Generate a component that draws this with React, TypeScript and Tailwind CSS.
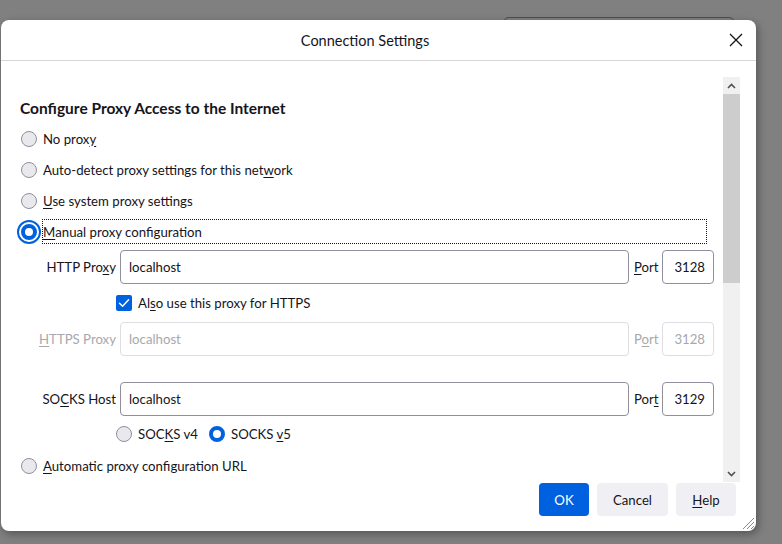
import type { ReactNode } from 'react';

const Radio = ({ checked = false, focused = false }: { checked?: boolean; focused?: boolean }) => (
  <span
    className={`relative flex h-[16px] w-[16px] shrink-0 items-center justify-center rounded-full ${
      checked ? 'border-[4px] border-[#0061e0] bg-white' : 'border border-[#8f8f9d] bg-[#e9e9ed]'
    } ${focused ? 'outline-2 outline-offset-[2px] outline-[#0061e0]' : ''}`}
  />
);

const Checkbox = () => (
  <span className="flex h-[16px] w-[16px] shrink-0 items-center justify-center rounded-[2px] bg-[#0061e0]">
    <svg width="12" height="12" viewBox="0 0 12 12" fill="none">
      <path d="M1.5 6.2 L4.6 9.2 L10.6 2.8" stroke="white" strokeWidth="1.5" strokeLinecap="round" strokeLinejoin="round" />
    </svg>
  </span>
);

const Key = ({ children }: { children: ReactNode }) => <span className="underline underline-offset-2">{children}</span>;

const ProxyRow = ({
  label,
  port,
  portLabel,
  disabled = false,
  mt,
}: {
  label: ReactNode;
  port: string;
  portLabel: ReactNode;
  disabled?: boolean;
  mt: string;
}) => (
  <div className={`flex items-center ${mt}`}>
    <div className={`w-[100px] pr-[4px] text-right ${disabled ? 'text-[#a8a8ac]' : ''}`}>{label}</div>
    <div
      className={`flex h-[34px] w-[509px] items-center rounded-[4px] border px-[8px] ${
        disabled ? 'border-[#dedee2] text-[#a8a8ac]' : 'border-[#8f8f9d]'
      }`}
    >
      localhost
    </div>
    <div className={`w-[33px] pl-[5px] ${disabled ? 'text-[#a8a8ac]' : ''}`}>{portLabel}</div>
    <div
      className={`flex h-[34px] w-[52px] items-center justify-end rounded-[4px] border px-[8px] ${
        disabled ? 'border-[#dedee2] text-[#a8a8ac]' : 'border-[#8f8f9d]'
      }`}
    >
      {port}
    </div>
  </div>
);

const ScrollArrow = ({ up }: { up?: boolean }) => (
  <div className="flex h-[17px] w-[17px] items-center justify-center">
    <svg width="9" height="6" viewBox="0 0 9 6">
      <path d={up ? 'M1 5 L4.5 1.5 L8 5' : 'M1 1 L4.5 4.5 L8 1'} stroke="#505050" strokeWidth="1.6" fill="none" />
    </svg>
  </div>
);

export default function App() {
  return (
    <div className="relative h-[544px] w-[782px] overflow-hidden bg-[#808080] text-[13.2px] leading-[18px] text-[#15141a] font-['Lato',sans-serif]">
      {/* window behind the dialog */}
      <div className="absolute left-[503px] top-[17px] h-[40px] w-[232px] rounded-[6px] border border-[#4e4e4e]" />

      <div className="relative pl-[1px] pt-[20px]">
        <div className="flex h-[511px] w-[755px] flex-col rounded-[8px] bg-white shadow-[2px_3px_8px_rgba(0,0,0,0.35)]">
          {/* header */}
          <div className="flex h-[41px] shrink-0 items-center border-b border-[#d6d6d6]">
            <div className="flex-1 pt-[2px] text-center text-[14.5px]">Connection Settings</div>
            <div className="flex w-[27px] items-center justify-start">
              <svg width="14" height="14" viewBox="0 0 14 14">
                <path d="M1 1 L13 13 M13 1 L1 13" stroke="#15141a" strokeWidth="1.3" />
              </svg>
            </div>
          </div>

          {/* scroll area */}
          <div className="flex h-[421px] shrink-0 pr-[16px] pt-[16px]">
            <div className="flex-1 overflow-hidden pl-[19px]">
              <div className="mt-[21px] h-[20px] text-[15.5px] font-bold leading-[20px]">
                Configure Proxy Access to the Internet
              </div>
              <div className="mt-[5px] flex h-[31px] items-center gap-[6px] pl-[1px]">
                <Radio />
                <span>
                  No prox<Key>y</Key>
                </span>
              </div>
              <div className="flex h-[31px] items-center gap-[6px] pl-[1px]">
                <Radio />
                <span>
                  Auto-detect proxy settings for this net<Key>w</Key>ork
                </span>
              </div>
              <div className="flex h-[31px] items-center gap-[6px] pl-[1px]">
                <Radio />
                <span>
                  <Key>U</Key>se system proxy settings
                </span>
              </div>
              <div className="flex h-[31px] items-center gap-[5px] pl-[1px]">
                <Radio checked focused />
                <span className="flex h-[25px] w-[665px] items-center border border-dotted border-[#15141a]">
                  <Key>M</Key>anual proxy configuration
                </span>
              </div>

              <ProxyRow
                mt="mt-[3px]"
                label={
                  <>
                    HTTP Pro<Key>x</Key>y
                  </>
                }
                portLabel={
                  <>
                    <Key>P</Key>ort
                  </>
                }
                port="3128"
              />
              <div className="mt-[10px] flex h-[18px] items-center gap-[6px] pl-[96px]">
                <Checkbox />
                <span>
                  Al<Key>s</Key>o use this proxy for HTTPS
                </span>
              </div>
              <ProxyRow
                mt="mt-[10px]"
                disabled
                label={
                  <>
                    <Key>H</Key>TTPS Proxy
                  </>
                }
                portLabel={
                  <>
                    P<Key>o</Key>rt
                  </>
                }
                port="3128"
              />
              <ProxyRow
                mt="mt-[26px]"
                label={
                  <>
                    SO<Key>C</Key>KS Host
                  </>
                }
                portLabel={
                  <>
                    Por<Key>t</Key>
                  </>
                }
                port="3129"
              />
              <div className="mt-[7px] flex h-[22px] items-center pl-[96px]">
                <Radio />
                <span className="ml-[6px] w-[71px]">
                  SOC<Key>K</Key>S v4
                </span>
                <Radio checked />
                <span className="ml-[6px]">
                  SOCKS <Key>v</Key>5
                </span>
              </div>
              <div className="mt-[10px] flex h-[22px] items-center gap-[6px] pl-[1px]">
                <Radio />
                <span>
                  <Key>A</Key>utomatic proxy configuration URL
                </span>
              </div>
            </div>

            {/* scrollbar */}
            <div className="flex w-[17px] flex-col bg-[#f0f0f0]">
              <ScrollArrow up />
              <div className="h-[189px] bg-[#cdcdcd]" />
              <div className="flex-1" />
              <ScrollArrow />
            </div>
          </div>

          {/* buttons */}
          <div className="relative flex flex-1 items-start justify-end gap-[8px] pr-[20px] pt-[1px]">
            <button className="h-[33px] w-[50px] rounded-[4px] bg-[#0061e0] text-white">OK</button>
            <button className="h-[33px] w-[71px] rounded-[4px] bg-[#f0f0f4]">Cancel</button>
            <button className="h-[33px] w-[60px] rounded-[4px] bg-[#f0f0f4]">
              <Key>H</Key>elp
            </button>
            <svg className="absolute bottom-[1px] right-[1px]" width="14" height="14" viewBox="0 0 14 14">
              <path d="M13 2 L2 13 M13 6 L6 13 M13 10 L10 13" stroke="#8a8a8a" strokeWidth="1" />
            </svg>
          </div>
        </div>
      </div>
    </div>
  );
}
